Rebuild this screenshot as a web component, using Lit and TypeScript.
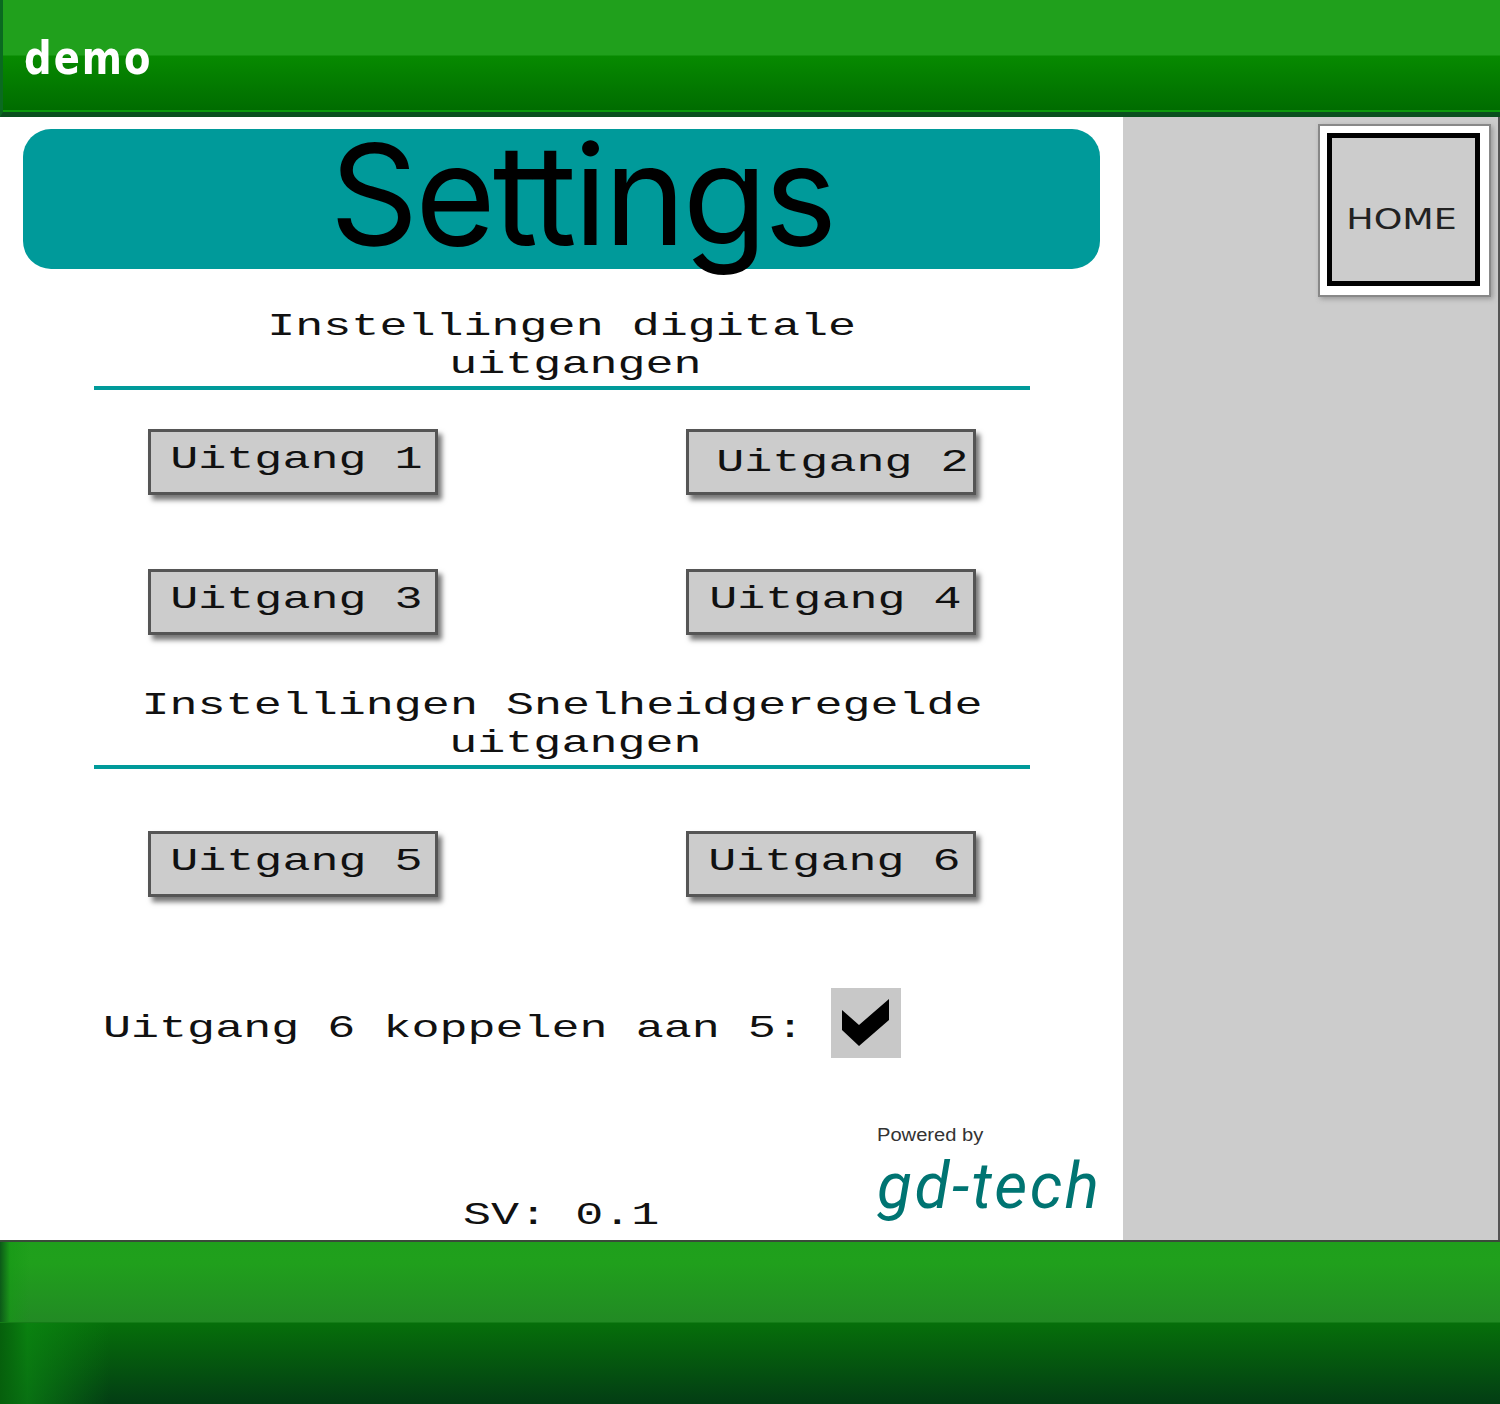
import { LitElement, html, css } from "lit";
import { customElement } from "lit/decorators.js";

@customElement("app-root")
export class AppRoot extends LitElement {
  static styles = css`
    :host { display: block; width: 1500px; height: 1404px; overflow: hidden; background: #fff; }
    .page { display: grid; grid-template-rows: 117px 1123px 164px; height: 1404px; filter: blur(0.5px); }
    .top {
      box-sizing: border-box; display: flex; align-items: center; padding: 0 0 0 21px;
      border-left: 3px solid #0a6a20; border-bottom: 5px solid #0a4f1e;
      box-shadow: inset 0 -2px 0 #0c9a0c;
      background: linear-gradient(#20a01c 0, #20a01c 55px, #078a00 56px, #006c00 110px);
    }
    .demo {
      display: inline-block; font: bold 47px "DejaVu Sans", sans-serif; letter-spacing: 2.5px; color: #fff;
      margin-top: 3px; transform: scaleX(.82); transform-origin: left center;
    }
    .main { display: grid; grid-template-columns: 1123px 1fr; min-height: 0; }
    .left { display: flex; flex-direction: column; background: #fff; min-width: 0; }
    .banner {
      box-sizing: border-box; margin: 12px 0 0 23px; width: 1077px; height: 140px; border-radius: 28px;
      background: #009a9a; color: #000; text-align: center; padding-left: 42px;
      font: 400 140px/130px "Inter", sans-serif; letter-spacing: -3px; white-space: nowrap;
    }
    .banner span { display: inline-block; transform: scaleX(.985); }
    .mono { font: 32px/38px "Liberation Mono", monospace; color: #111; white-space: nowrap; }
    .wide { display: inline-block; transform: scaleX(1.46); }
    .head { margin-left: 94px; width: 936px; text-align: center; }
    .head div:last-of-type { padding-left: 26px; }
    .head hr { border: 0; height: 4px; margin: 2px 0 0; background: #009a9a; }
    .h1 { margin-top: 39px; }
    .h2 { margin-top: 52px; }
    .btns { display: grid; grid-template-columns: 290px 290px; column-gap: 248px; row-gap: 74px; margin-left: 148px; }
    .r1 { margin-top: 39px; }
    .r2 { margin-top: 62px; }
    .btn {
      box-sizing: border-box; height: 66px; display: flex; align-items: center; justify-content: center;
      background: #ccc; border: 3px solid #555; box-shadow: 4px 5px 5px #777; padding: 0 0 4px 7px;
    }
    .btn.b2 { padding: 1px 0 0 22px; }
    .btn.b4 { padding: 0 0 4px 8px; }
    .check { display: grid; grid-template-columns: 728px 70px; margin: 91px 0 0 103px; align-items: center; }
    .check .wide { transform-origin: left center; }
    .check .mono { padding-top: 12px; }
    .box { width: 70px; height: 70px; background: #c8c8c8; display: block; }
    .foot { flex: 1; display: grid; grid-template-columns: 877px 1fr; min-height: 0; }
    .sv { align-self: end; padding: 0 0 5px 245px; text-align: center; }
    .logo { display: flex; flex-direction: column; padding-top: 67px; }
    .pow {
      font: 17.5px/20px "Liberation Sans", sans-serif; color: #333; display: inline-block;
      transform: scaleX(1.15); transform-origin: left center;
    }
    .gd {
      font: italic 400 64px/75px "Roboto", sans-serif; color: #007472; margin-top: 4px;
      letter-spacing: 2.5px; white-space: nowrap;
    }
    .right { position: relative; background: #ccc; border-right: 2px solid #555; }
    .homewrap { display: flex; justify-content: flex-end; padding: 7px 7px 0 0; }
    .home {
      box-sizing: border-box; width: 173px; height: 173px; padding: 7px 9px 9px 7px; background: #fff;
      border: 2px solid #888; box-shadow: 2px 2px 5px #999;
    }
    .inner {
      box-sizing: border-box; height: 100%; border: 5px solid #000; background: #ccc;
      display: flex; align-items: center; justify-content: center; padding: 20px 4px 0 0;
      font: 28px "DejaVu Sans", sans-serif; color: #222;
    }
    .inner span { display: inline-block; transform: scaleX(1.3); }
    .bottom {
      border-top: 2px solid #3a4a3a; box-sizing: border-box; position: relative;
      background: linear-gradient(#1f9f1c 0, #20a01c 20px, #228a24 80px, #066f0a 81px, #033d14 162px);
    }
    .bottom::before {
      content: ""; position: absolute; left: 0; top: 0; height: 80px; width: 30px;
      background: linear-gradient(90deg, #0c5a18, rgba(20, 150, 20, .5) 10px, rgba(20, 150, 20, 0));
    }
    .bottom::after {
      content: ""; position: absolute; left: 0; top: 81px; bottom: 0; width: 110px;
      background: linear-gradient(90deg, #06600c, rgba(12, 140, 18, .65) 25%, rgba(12, 140, 18, 0));
    }
  `;

  private btn(n: number) {
    return html`<div class="btn b${n}"><span class="mono wide">Uitgang ${n}</span></div>`;
  }

  render() {
    return html`<div class="page">
      <header class="top"><span class="demo">demo</span></header>
      <div class="main">
        <div class="left">
          <div class="banner"><span>Settings</span></div>
          <div class="head h1 mono">
            <div><span class="wide">Instellingen digitale</span></div>
            <div><span class="wide">uitgangen</span></div>
            <hr />
          </div>
          <div class="btns r1">${[1, 2, 3, 4].map((n) => this.btn(n))}</div>
          <div class="head h2 mono">
            <div><span class="wide">Instellingen Snelheidgeregelde</span></div>
            <div><span class="wide">uitgangen</span></div>
            <hr />
          </div>
          <div class="btns r2">${[5, 6].map((n) => this.btn(n))}</div>
          <div class="check">
            <div class="mono"><span class="wide">Uitgang 6 koppelen aan 5:</span></div>
            <svg class="box" viewBox="0 0 70 70"><polygon points="11,22 28,37 58,11 58,32 28,58 11,42" fill="#000"></polygon></svg>
          </div>
          <div class="foot">
            <div class="sv mono"><span class="wide">SV: 0.1</span></div>
            <div class="logo"><div><span class="pow">Powered by</span></div><div class="gd">gd-tech</div></div>
          </div>
        </div>
        <aside class="right">
          <div class="homewrap"><div class="home"><div class="inner"><span>HOME</span></div></div></div>
        </aside>
      </div>
      <footer class="bottom"></footer>
    </div>`;
  }
}
